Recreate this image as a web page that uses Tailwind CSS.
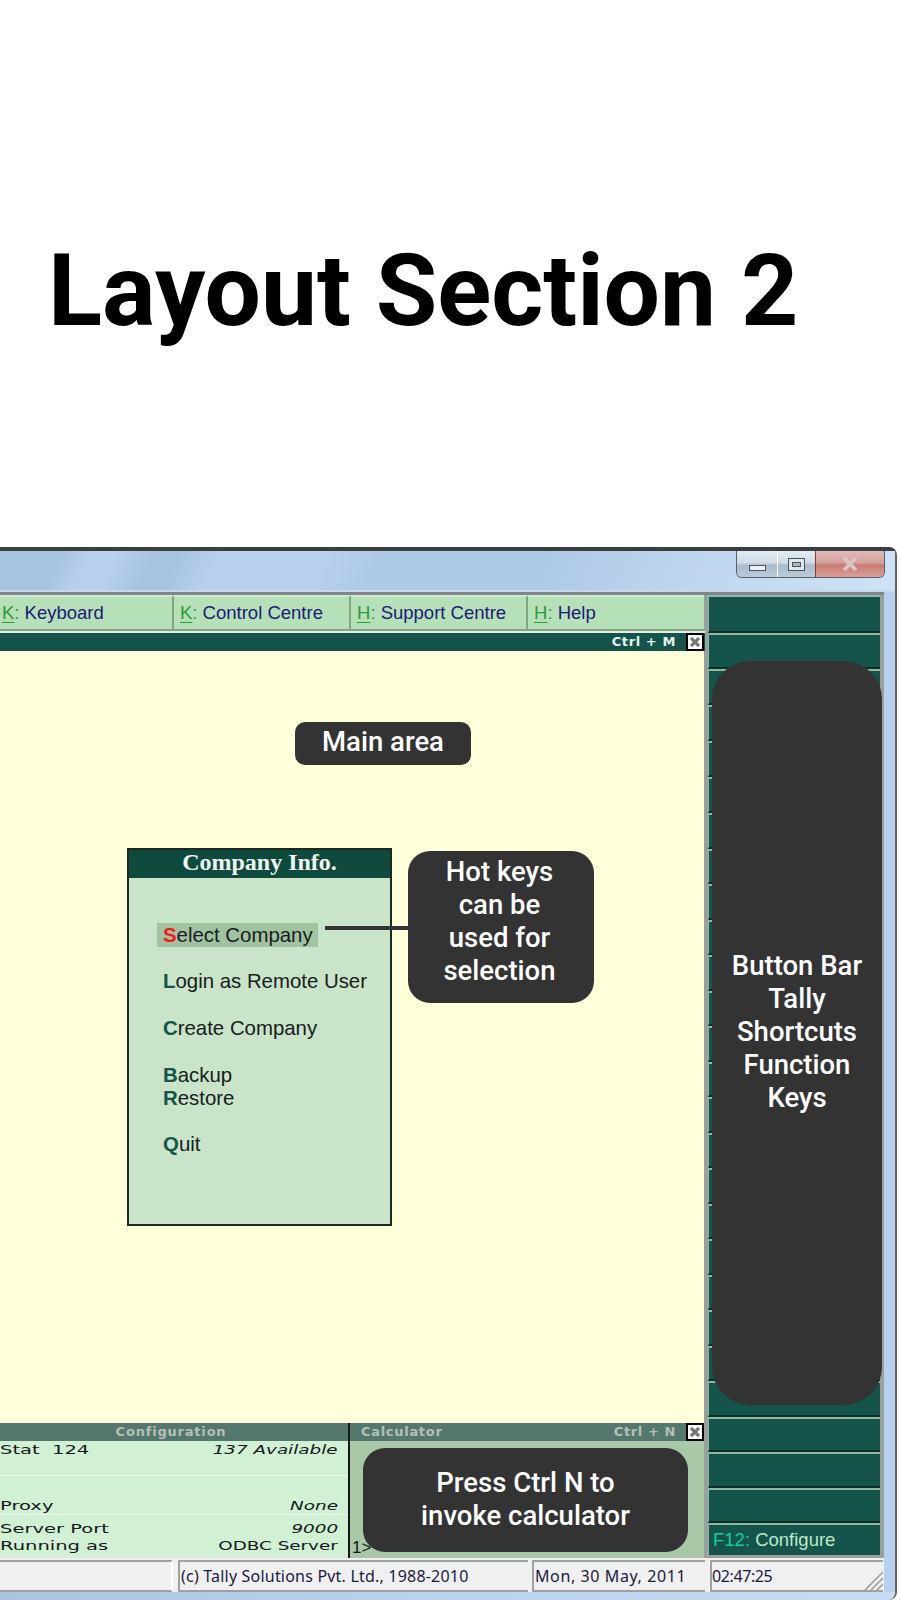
<!DOCTYPE html>
<html>
<head>
<meta charset="utf-8" />
<title>Layout Section 2</title>
<script src="https://cdn.jsdelivr.net/npm/@tailwindcss/browser@4"></script>
</head>
<body class="bg-white">
<div id="page" class="relative w-[900px] h-[1600px] overflow-hidden bg-white font-['Liberation_Sans',sans-serif]">

  <!-- title -->
  <div class="h-[547px] flex items-center pl-[48px] pt-[35px]">
    <h1 class="font-['Roboto',sans-serif] font-bold text-[100px] leading-none text-black whitespace-nowrap">Layout Section 2</h1>
  </div>

  <!-- tally window -->
  <div class="w-[897px] h-[1053px] flex flex-col border-t-4 border-t-[#3c3f42] border-r-2 border-r-[#5f6468] rounded-tr-lg rounded-br-lg bg-[#b7d1ec]">
    <div class="h-[41px] shrink-0 flex justify-end items-start pr-[10px] border-b-2 border-b-[#c8d8ea] bg-[linear-gradient(115deg,#a9c4df_0%,#a9c4df_7%,#b7d1ec_10%,#b7d1ec_13%,#a8c3de_17%,#a8c3de_20%,#b7d1ec_24%,#b7d1ec_36%,#aec9e4_42%,#aec9e4_60%,#bcd5ef_75%,#cfe2f6_100%)]">
      <div class="flex h-[27px] rounded-b-md border border-t-0 border-[#55606c] overflow-hidden">
        <div class="w-[41px] flex items-end justify-center pb-[6px] border-r border-white bg-[linear-gradient(180deg,#e4ecf4_0%,#d0dce8_45%,#a9bbcd_55%,#bccbda_100%)]">
          <div class="w-[17px] h-[6px] border border-[#48535e] bg-[#edf1f5]"></div>
        </div>
        <div class="w-[38px] flex items-center justify-center border-r border-[#8c3a2e] bg-[linear-gradient(180deg,#e4ecf4_0%,#d0dce8_45%,#a9bbcd_55%,#bccbda_100%)]">
          <div class="w-[17px] h-[13px] border border-[#48535e] flex items-center justify-center bg-[#dfe6ed]">
            <div class="w-[9px] h-[5px] border border-[#48535e] bg-[#a9b8c6]"></div>
          </div>
        </div>
        <div class="w-[68px] flex items-center justify-center bg-[linear-gradient(180deg,#dcbcb9_0%,#d8a09a_45%,#c97a72_55%,#d8a09a_100%)]">
          <svg width="16" height="14" viewBox="0 0 16 14"><path d="M2 1 L14 13 M14 1 L2 13" stroke="#dcc6c2" stroke-width="3.8" fill="none"/></svg>
        </div>
      </div>
    </div>

    <!-- client area -->
    <div class="mr-[11px] h-[963px] shrink-0 box-content border-t-[3px] border-t-[#7f868c] flex bg-[#9aa09c]">
      <div class="w-[705px] shrink-0 flex flex-col">
        <!-- menu -->
        <div class="h-[38px] shrink-0 flex bg-[#e6efe6] pb-[2px] text-[18.5px] leading-none text-[#1c1a78]">
          <div class="w-[174px] flex items-center pl-[2px] bg-[#b6e0b8] border-t-2 border-t-[#d2ecd3] border-b-2 border-b-[#83a584] border-r-2 border-r-[#83a584]"><span><span class="text-[#2f9a3c] underline underline-offset-[3px]">K</span><span class="text-[#2f9a3c]">:</span> Keyboard</span></div>
          <div class="w-[177px] flex items-center pl-[6px] bg-[#b6e0b8] border-t-2 border-t-[#d2ecd3] border-b-2 border-b-[#83a584] border-r-2 border-r-[#83a584]"><span><span class="text-[#2f9a3c] underline underline-offset-[3px]">K</span><span class="text-[#2f9a3c]">:</span> Control Centre</span></div>
          <div class="w-[177px] flex items-center pl-[6px] bg-[#b6e0b8] border-t-2 border-t-[#d2ecd3] border-b-2 border-b-[#83a584] border-r-2 border-r-[#83a584]"><span><span class="text-[#2f9a3c] underline underline-offset-[3px]">H</span><span class="text-[#2f9a3c]">:</span> Support Centre</span></div>
          <div class="w-[176px] flex items-center pl-[6px] bg-[#b6e0b8] border-t-2 border-t-[#d2ecd3] border-b-2 border-b-[#83a584]"><span><span class="text-[#2f9a3c] underline underline-offset-[3px]">H</span><span class="text-[#2f9a3c]">:</span> Help</span></div>
          <div class="w-[1px] bg-[#9aa09c]"></div>
        </div>
        <!-- info bar -->
        <div class="h-[18px] shrink-0 flex items-center justify-end bg-[#14544a] pr-[1px]">
          <span class="font-['DejaVu_Sans',sans-serif] font-bold text-[13px] tracking-[0.6px] text-[#e6f2f0] mr-[10px]">Ctrl + M</span>
          <div class="w-[18px] h-[18px] flex items-center justify-center bg-white border-2 border-black">
            <svg width="10" height="10" viewBox="0 0 10 10"><path d="M1 1 L9 9 M9 1 L1 9" stroke="#777" stroke-width="3.2"/></svg>
          </div>
        </div>
        <!-- main area -->
        <div class="flex-1 bg-[#ffffd9] mr-[1px] pt-[197px] pl-[127px]">
          <div class="w-[265px] h-[378px] flex flex-col border-2 border-[#1a2a22] bg-[#c9e4c9]">
            <div class="h-[28px] shrink-0 flex items-center justify-center pb-[4px] bg-[#0f4a3e] font-['Liberation_Serif',serif] font-bold text-[24px] leading-none text-[#f0f6f0]">Company Info.</div>
            <div class="pt-[45px] pl-[34px] flex flex-col text-[20.4px] leading-[23px] text-[#16201c]">
              <div class="h-[24px] w-[161px] -ml-[6px] pl-[6px] bg-[#a2c2a2] flex items-center whitespace-nowrap"><span><b class="text-[#f01818]">S</b>elect Company</span></div>
              <div class="mt-[23px] whitespace-nowrap"><b class="text-[#14544a]">L</b>ogin as Remote User</div>
              <div class="mt-[24px] whitespace-nowrap"><b class="text-[#14544a]">C</b>reate Company</div>
              <div class="mt-[24px] whitespace-nowrap"><b class="text-[#14544a]">B</b>ackup</div>
              <div class="whitespace-nowrap"><b class="text-[#14544a]">R</b>estore</div>
              <div class="mt-[23px] whitespace-nowrap"><b class="text-[#14544a]">Q</b>uit</div>
            </div>
          </div>
        </div>
        <!-- bottom panels -->
        <div class="h-[135px] shrink-0 flex mr-[1px]">
          <div class="w-[348px] shrink-0 flex flex-col bg-[#d2f0d4]">
            <div class="h-[18px] flex items-center justify-center pr-[6px] bg-[#54786e] font-['DejaVu_Sans',sans-serif] font-bold text-[13px] tracking-[0.8px] text-[#b4c0ba]">Configuration</div>
            <div class="flex-1 font-['DejaVu_Sans',sans-serif] text-[13px] text-[#14181a]">
              <div class="h-[35px] flex justify-between border-b border-b-[#f0faf0] pr-[10px]">
                <span class="origin-left scale-x-[1.5] leading-[18px]">Stat&nbsp; 124</span>
                <span class="origin-right scale-x-[1.41] italic leading-[18px]">137 Available</span>
              </div>
              <div class="h-[39px] pt-[21px] flex justify-between border-b border-b-[#f0faf0] pr-[10px]">
                <span class="origin-left scale-x-[1.5] leading-[18px]">Proxy</span>
                <span class="origin-right scale-x-[1.41] italic leading-[18px]">None</span>
              </div>
              <div class="pt-[6px] flex justify-between pr-[10px] leading-[16px]">
                <span class="origin-left scale-x-[1.5]">Server Port</span>
                <span class="origin-right scale-x-[1.41] italic">9000</span>
              </div>
              <div class="flex justify-between pr-[10px] leading-[17px]">
                <span class="origin-left scale-x-[1.5]">Running as</span>
                <span class="origin-right scale-x-[1.41]">ODBC Server</span>
              </div>
            </div>
          </div>
          <div class="flex-1 flex flex-col border-l-2 border-l-[#14181a] bg-[#a8c8a8]">
            <div class="h-[18px] shrink-0 flex items-center bg-[#54786e] pl-[11px]">
              <span class="font-['DejaVu_Sans',sans-serif] font-bold text-[13px] tracking-[0.7px] text-[#b4c0ba]">Calculator</span>
              <span class="ml-auto font-['DejaVu_Sans',sans-serif] font-bold text-[13px] tracking-[0.6px] text-[#b4c0ba] mr-[10px]">Ctrl + N</span>
              <div class="w-[18px] h-[18px] flex items-center justify-center bg-white border-2 border-black">
                <svg width="10" height="10" viewBox="0 0 10 10"><path d="M1 1 L9 9 M9 1 L1 9" stroke="#777" stroke-width="3.2"/></svg>
              </div>
            </div>
            <div class="flex-1 flex items-end pl-[2px] text-[17px] leading-[20px] text-[#14181a]">1&gt;</div>
          </div>
        </div>
      </div>

      <!-- button bar -->
      <div class="flex-1 flex flex-col pl-[3px] pr-[4px] pb-[3px] bg-[#9aa09c]">
        <div class="h-[38px] shrink-0 bg-[#14544a] border-t-2 border-l border-t-[#8fb8a0] border-l-[#8fb8a0] border-b-2 border-b-[#0a2f28]"></div>
        <div class="h-[36px] shrink-0 bg-[#14544a] border-t-2 border-l border-t-[#8fb8a0] border-l-[#8fb8a0] border-b-2 border-b-[#0a2f28]"></div>
        <div class="h-[36px] shrink-0 bg-[#14544a] border-t-2 border-l border-t-[#8fb8a0] border-l-[#8fb8a0] border-b-2 border-b-[#0a2f28]"></div>
        <div class="h-[36px] shrink-0 bg-[#14544a] border-t-2 border-l border-t-[#8fb8a0] border-l-[#8fb8a0] border-b-2 border-b-[#0a2f28]"></div>
        <div class="h-[36px] shrink-0 bg-[#14544a] border-t-2 border-l border-t-[#8fb8a0] border-l-[#8fb8a0] border-b-2 border-b-[#0a2f28]"></div>
        <div class="h-[36px] shrink-0 bg-[#14544a] border-t-2 border-l border-t-[#8fb8a0] border-l-[#8fb8a0] border-b-2 border-b-[#0a2f28]"></div>
        <div class="flex-1 bg-[#14544a] border-t-2 border-l border-t-[#8fb8a0] border-l-[#8fb8a0] border-b-2 border-b-[#0a2f28]"></div>
        <div class="flex-1 bg-[#14544a] border-t-2 border-l border-t-[#8fb8a0] border-l-[#8fb8a0] border-b-2 border-b-[#0a2f28]"></div>
        <div class="flex-1 bg-[#14544a] border-t-2 border-l border-t-[#8fb8a0] border-l-[#8fb8a0] border-b-2 border-b-[#0a2f28]"></div>
        <div class="flex-1 bg-[#14544a] border-t-2 border-l border-t-[#8fb8a0] border-l-[#8fb8a0] border-b-2 border-b-[#0a2f28]"></div>
        <div class="flex-1 bg-[#14544a] border-t-2 border-l border-t-[#8fb8a0] border-l-[#8fb8a0] border-b-2 border-b-[#0a2f28]"></div>
        <div class="flex-1 bg-[#14544a] border-t-2 border-l border-t-[#8fb8a0] border-l-[#8fb8a0] border-b-2 border-b-[#0a2f28]"></div>
        <div class="flex-1 bg-[#14544a] border-t-2 border-l border-t-[#8fb8a0] border-l-[#8fb8a0] border-b-2 border-b-[#0a2f28]"></div>
        <div class="flex-1 bg-[#14544a] border-t-2 border-l border-t-[#8fb8a0] border-l-[#8fb8a0] border-b-2 border-b-[#0a2f28]"></div>
        <div class="flex-1 bg-[#14544a] border-t-2 border-l border-t-[#8fb8a0] border-l-[#8fb8a0] border-b-2 border-b-[#0a2f28]"></div>
        <div class="flex-1 bg-[#14544a] border-t-2 border-l border-t-[#8fb8a0] border-l-[#8fb8a0] border-b-2 border-b-[#0a2f28]"></div>
        <div class="flex-1 bg-[#14544a] border-t-2 border-l border-t-[#8fb8a0] border-l-[#8fb8a0] border-b-2 border-b-[#0a2f28]"></div>
        <div class="flex-1 bg-[#14544a] border-t-2 border-l border-t-[#8fb8a0] border-l-[#8fb8a0] border-b-2 border-b-[#0a2f28]"></div>
        <div class="flex-1 bg-[#14544a] border-t-2 border-l border-t-[#8fb8a0] border-l-[#8fb8a0] border-b-2 border-b-[#0a2f28]"></div>
        <div class="flex-1 bg-[#14544a] border-t-2 border-l border-t-[#8fb8a0] border-l-[#8fb8a0] border-b-2 border-b-[#0a2f28]"></div>
        <div class="flex-1 bg-[#14544a] border-t-2 border-l border-t-[#8fb8a0] border-l-[#8fb8a0] border-b-2 border-b-[#0a2f28]"></div>
        <div class="flex-1 bg-[#14544a] border-t-2 border-l border-t-[#8fb8a0] border-l-[#8fb8a0] border-b-2 border-b-[#0a2f28]"></div>
        <div class="flex-1 bg-[#14544a] border-t-2 border-l border-t-[#8fb8a0] border-l-[#8fb8a0] border-b-2 border-b-[#0a2f28]"></div>
        <div class="flex-1 bg-[#14544a] border-t-2 border-l border-t-[#8fb8a0] border-l-[#8fb8a0] border-b-2 border-b-[#0a2f28]"></div>
        <div class="flex-1 bg-[#14544a] border-t-2 border-l border-t-[#8fb8a0] border-l-[#8fb8a0] border-b-2 border-b-[#0a2f28]"></div>
        <div class="flex-1 bg-[#14544a] border-t-2 border-l border-t-[#8fb8a0] border-l-[#8fb8a0] border-b-2 border-b-[#0a2f28]"></div>
        <div class="h-[32px] shrink-0 flex items-center pl-[4px] text-[18.5px] leading-none bg-[#14544a] border-t-2 border-l border-t-[#8fb8a0] border-l-[#8fb8a0] text-[#bce8cc]"><span><span class="text-[#10d0a0]">F12:</span> Configure</span></div>
      </div>
    </div>

    <!-- status bar -->
    <div class="mr-[11px] h-[34px] shrink-0 pt-[2px] flex bg-[#f0f0f0] font-['Noto_Sans',sans-serif] text-[16px] leading-none text-[#1a1a40]">
      <div class="w-[173px] border-t-2 border-b-2 border-t-[#a0a0a0] border-b-[#a0a0a0] border-r-2 border-r-white"></div>
      <div class="ml-[5px] w-[350px] pl-[1px] flex items-center tracking-[0.2px] border-t-2 border-b-2 border-l-2 border-[#a0a0a0]">(c) Tally Solutions Pvt. Ltd., 1988-2010</div>
      <div class="ml-[4px] w-[173px] pl-[1px] flex items-center tracking-[0.6px] border-t-2 border-b-2 border-l-2 border-[#a0a0a0]">Mon, 30 May, 2011</div>
      <div class="ml-[5px] w-[173px] flex items-center tracking-[-0.4px] border-t-2 border-b-2 border-l-2 border-[#a0a0a0] relative">02:47:25
        <svg class="absolute right-0 bottom-0" width="20" height="20" viewBox="0 0 20 20"><path d="M20 2 L2 20 M20 8 L8 20 M20 14 L14 20" stroke="#9a9a9a" stroke-width="1.5" fill="none"/></svg>
      </div>
    </div>
    <div class="flex-1 rounded-br-lg bg-[linear-gradient(90deg,#a9c4df,#b7d1ec_40%,#c6dcf3)]"></div>
  </div>

  <!-- callouts -->
  <div class="absolute left-[295px] top-[722px] w-[176px] h-[43px] rounded-[10px] bg-[#333333] flex items-center justify-center pb-[3px] font-['Roboto',sans-serif] font-medium text-[27.5px] text-white">Main area</div>
  <div class="absolute left-[325px] top-[926px] w-[84px] h-[4px] bg-[#333333]"></div>
  <div class="absolute left-[408px] top-[851px] w-[186px] h-[152px] rounded-[22px] bg-[#333333] flex items-center justify-center text-center pb-[13px] pr-[3px] font-['Roboto',sans-serif] font-medium text-[27.5px] leading-[33px] text-white">Hot keys<br>can be<br>used for<br>selection</div>
  <div class="absolute left-[712px] top-[661px] w-[170px] h-[744px] rounded-[38px] bg-[#333333] flex items-center justify-center text-center pb-[3px] font-['Roboto',sans-serif] font-medium text-[27.5px] leading-[33px] text-white">Button Bar<br>Tally<br>Shortcuts<br>Function<br>Keys</div>
  <div class="absolute left-[363px] top-[1448px] w-[325px] h-[104px] rounded-[22px] bg-[#333333] flex items-center justify-center text-center pb-[2px] font-['Roboto',sans-serif] font-medium text-[27.5px] leading-[33px] text-white">Press Ctrl N to<br>invoke calculator</div>
</div>
</body>
</html>
